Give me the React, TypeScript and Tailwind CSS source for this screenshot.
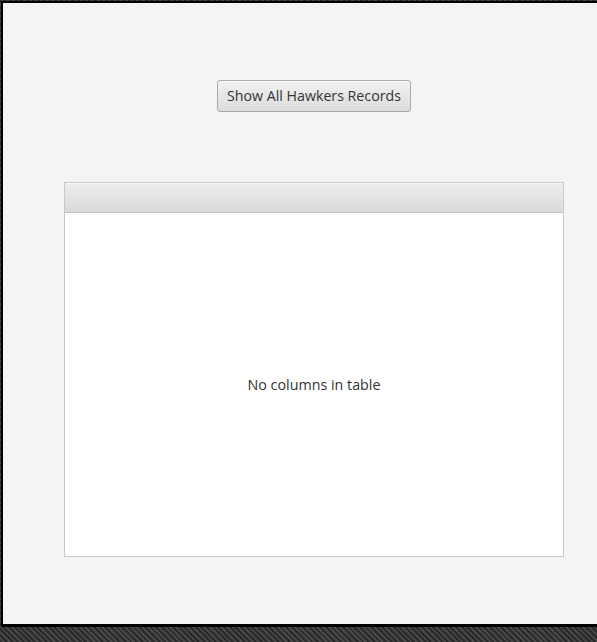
export default function App() {
  return (
    <div className="h-[642px] w-[597px] overflow-hidden bg-[#333] bg-[repeating-linear-gradient(45deg,#2a2a2a_0px,#2a2a2a_2px,#474747_2px,#474747_4px)] font-['Open_Sans',sans-serif]">
      <div className="ml-[1px] mt-[1px] flex h-[626px] w-[600px] flex-col border-l-2 border-t-2 border-b-[3px] border-black bg-[#f4f4f4]">
        <div className="ml-[61px] flex w-[500px] justify-center pt-[77px]">
          <button className="h-[32px] rounded-[3px] border border-[#a9a9a9] bg-gradient-to-b from-[#f1f1f1] to-[#dcdcdc] px-[9px] text-[14.2px] leading-none text-[#333] shadow-[inset_0_1px_0_#fff]">
            Show All Hawkers Records
          </button>
        </div>
        <div className="ml-[61px] mt-[70px] flex h-[375px] w-[500px] flex-col border border-[#c8c8c8] bg-white">
          <div className="h-[30px] border-b border-[#c4c4c4] bg-gradient-to-b from-[#eeeeee] to-[#d9d9d9] shadow-[inset_0_1px_0_#f8f8f8]" />
          <div className="flex flex-1 items-center justify-center text-[14.3px] text-[#333]">
            No columns in table
          </div>
        </div>
      </div>
    </div>
  )
}
